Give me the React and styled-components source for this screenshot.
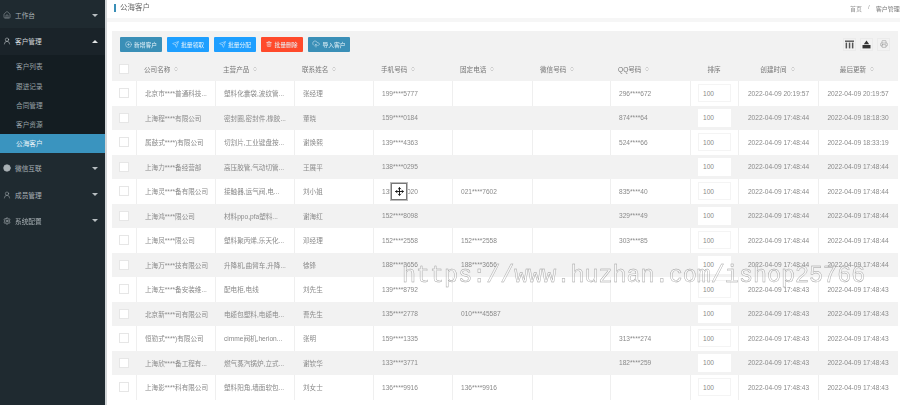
import styled, { createGlobalStyle } from "styled-components";
import {
  Home,
  UserRound,
  ChevronsUpDown,
  CirclePlus,
  Send,
  Trash2,
  CloudUpload,
  Printer,
  Settings,
  Move,
  Compass,
} from "lucide-react";

const GlobalStyle = createGlobalStyle`
  html, body {
    margin: 0;
    height: 405px;
    overflow: hidden;
    background: #fff;
    font-family: "Liberation Sans", "Noto Sans CJK SC", sans-serif;
  }
`;

const Page = styled.div`
  position: relative;
  display: flex;
  width: 900px;
  height: 405px;
  overflow: hidden;
  filter: blur(0.45px);
`;

const Sidebar = styled.nav`
  width: 107px;
  flex-shrink: 0;
  padding-top: 2px;
  box-sizing: border-box;
  background: #1f2a30;
  border-right: 2px solid #d3d6d8;
`;

const MenuItem = styled.div`
  display: flex;
  align-items: center;
  height: 26.3px;
  padding-left: 3px;
  gap: 4px;
  font-size: 6.7px;
  color: ${(props) => (props.$open ? "#d5dadc" : "#a9b1b5")};
  background: ${(props) => (props.$open ? "#1a2329" : "transparent")};
`;

const MenuLabel = styled.span`
  flex: 1;
`;

const Caret = styled.span`
  width: 0;
  height: 0;
  margin-right: 7px;
  border-left: 3px solid transparent;
  border-right: 3px solid transparent;
  border-top: ${(props) => (props.$up ? "0" : "3px solid #b8bec1")};
  border-bottom: ${(props) => (props.$up ? "3px solid #e2e5e6" : "0")};
`;

const SubMenu = styled.div`
  padding-top: 2px;
  background: #141d22;
  margin-bottom: 2px;
`;

const SubItem = styled.div`
  display: flex;
  align-items: center;
  height: 19.3px;
  padding-left: 16px;
  font-size: 6.7px;
  color: ${(props) => (props.$active ? "#e8f3f8" : "#98a1a6")};
  background: ${(props) => (props.$active ? "#3a94bf" : "transparent")};
`;

const Main = styled.main`
  flex: 1;
  min-width: 0;
  display: flex;
  flex-direction: column;
`;

const TopBar = styled.header`
  display: flex;
  align-items: center;
  justify-content: space-between;
  height: 16px;
  padding: 0 0 2px 7px;
  border-bottom: 4px solid #f6f6f6;
`;

const PageTitle = styled.h1`
  margin: 0;
  padding-left: 4px;
  border-left: 2px solid #3a8fb7;
  font-size: 7.5px;
  line-height: 8px;
  font-weight: 400;
  color: #666;
`;

const Crumbs = styled.div`
  display: flex;
  gap: 6px;
  width: 50px;
  flex-shrink: 0;
  overflow: hidden;
  white-space: nowrap;
  font-size: 6px;
  color: #999;
`;

const CrumbCurrent = styled.span`
  color: #777;
`;

const Panel = styled.section`
  margin: 9px 2px 0 5px;
  background: #f2f2f2;
`;

const Toolbar = styled.div`
  display: flex;
  align-items: center;
  height: 26px;
  padding: 0 8px;
  gap: 5px;
`;

const ActionButton = styled.button`
  display: flex;
  align-items: center;
  justify-content: center;
  gap: 2px;
  width: 42px;
  height: 15px;
  padding: 0;
  border: 0;
  border-radius: 1px;
  font-family: inherit;
  font-size: 5.8px;
  color: #e8f4fa;
  background: ${(props) => props.$bg || "#1e9fff"};
`;

const ToolGroup = styled.div`
  display: flex;
  gap: 4px;
  margin-left: auto;
`;

const ToolButton = styled.div`
  display: flex;
  align-items: center;
  justify-content: center;
  width: 13px;
  height: 13px;
  border: 1px solid #ebebeb;
  box-sizing: border-box;
  color: ${(props) => props.$color || "#666"};
`;

const columns = "24px 79px 79px 79px 79px 80px 78px 80px 48px 80px 79px";

const HeadRow = styled.div`
  display: grid;
  grid-template-columns: ${columns};
  height: 24px;
`;

const Row = styled.div`
  display: grid;
  grid-template-columns: ${columns};
  height: 24.5px;
  background: ${(props) => (props.$even ? "#f2f2f2" : "#fff")};
`;

const HeadCell = styled.div`
  display: flex;
  align-items: center;
  justify-content: ${(props) => (props.$center ? "center" : "flex-start")};
  gap: 3px;
  padding-left: ${(props) => (props.$center ? "0" : "8px")};
  font-size: 6.6px;
  color: #777;
`;

const Cell = styled.div`
  display: flex;
  align-items: center;
  justify-content: ${(props) => (props.$center ? "center" : "flex-start")};
  padding-left: ${(props) => (props.$center ? "0" : "8px")};
  border-left: 1px solid ${(props) => (props.$even ? "#f2f2f2" : "#efefef")};
  box-sizing: border-box;
  overflow: hidden;
  white-space: nowrap;
  font-size: 6.6px;
  color: #8a8a8a;
`;

const CheckCell = styled.div`
  display: flex;
  align-items: center;
  justify-content: center;
`;

const CheckBox = styled.span`
  width: 8px;
  height: 8px;
  background: #fff;
  border: 1px solid #e6e6e6;
`;

const SortInput = styled.div`
  display: flex;
  align-items: center;
  width: 33px;
  height: 18px;
  padding-left: 4px;
  box-sizing: border-box;
  background: #fff;
  border: 1px solid ${(props) => (props.$even ? "#fff" : "#f4f4f4")};
  font-size: 6.6px;
  color: #8a8a8a;
`;

const Watermark = styled.div`
  position: absolute;
  left: 402px;
  top: 261px;
  font-family: "Liberation Mono", monospace;
  font-size: 23.4px;
  line-height: 30px;
  color: rgba(255, 255, 255, 0.3);
  -webkit-text-stroke: 0.4px #9a9a9a;
`;

const DragCursor = styled.div`
  position: absolute;
  left: 391px;
  top: 183px;
  display: flex;
  align-items: center;
  justify-content: center;
  width: 16px;
  height: 17px;
  box-sizing: border-box;
  background: #fff;
  border: 1px solid #777;
  outline: 1px solid #bbb;
  color: #111;
`;

const heads = ["公司名称", "主营产品", "联系姓名", "手机号码", "固定电话", "微信号码", "QQ号码"];

const day = "2022-04-09 ";

const rows = [
  ["北京市****普通科技...", "塑料化囊袋,波纹管...", "张经理", "199****5777", "", "", "296****672", "20:19:57", "20:19:57"],
  ["上海程****有限公司", "密封圈,密封件,橡胶...", "董晓", "159****0184", "", "", "874****64", "17:48:44", "18:18:30"],
  ["属鼓式****)有限公司", "切割片,工业键盘按...", "谢焕熙", "139****4363", "", "", "524****66", "17:48:44", "18:33:19"],
  ["上海力****备经营部", "高压胶管,气动切管...", "王展平", "138****0295", "", "", "", "17:48:44", "17:48:44"],
  ["上海灵****备有限公司", "接触器,运气阀,电...", "刘小姐", "135****3020", "021****7602", "", "835****40", "17:48:44", "17:48:44"],
  ["上海鸿****限公司", "材料ppo,pfa塑料...", "谢海红", "152****8098", "", "", "329****49", "17:48:44", "17:48:44"],
  ["上海凤****限公司", "塑料聚丙烯,乐天化...", "邓经理", "152****2558", "152****2558", "", "303****85", "17:48:44", "17:48:44"],
  ["上海万****技有限公司", "升降机,曲臂车,升降...", "徐锋", "188****3656", "188****3656", "", "", "17:48:44", "17:48:44"],
  ["上海左****备安装维...", "配电柜,电线", "刘先生", "139****8792", "", "", "", "17:48:43", "17:48:43"],
  ["北京新****司有限公司", "电缆包塑料,电缆电...", "曹先生", "135****2778", "010****45587", "", "", "17:48:43", "17:48:43"],
  ["恒勤式****)有限公司", "cimme阀机,herion...", "张明", "159****1335", "", "", "313****274", "17:48:43", "17:48:43"],
  ["上海欣****备工程有...", "燃气蒸汽锅炉,立式...", "谢钦华", "133****3771", "", "", "182****259", "17:48:43", "17:48:43"],
  ["上海影****科有限公司", "塑料阳角,墙面软包...", "刘女士", "136****9916", "136****9916", "", "", "17:48:43", "17:48:43"],
];

function SortMark() {
  return <ChevronsUpDown size={6} color="#aaa" strokeWidth={2} />;
}

function ColumnsIcon() {
  return (
    <svg width="9" height="9" viewBox="0 0 9 9" fill="currentColor">
      <rect x="0" y="0.5" width="9" height="1.4" />
      <rect x="0.6" y="2.6" width="1.5" height="5.8" />
      <rect x="3.8" y="2.6" width="1.5" height="5.8" />
      <rect x="6.9" y="2.6" width="1.5" height="5.8" />
    </svg>
  );
}

function ExportIcon() {
  return (
    <svg width="9" height="9" viewBox="0 0 9 9" fill="currentColor">
      <path d="M4.5 0.5 L7.2 4.2 H1.8 Z" />
      <rect x="0.5" y="5" width="8" height="3.4" />
    </svg>
  );
}

function App() {
  return (
    <Page>
      <GlobalStyle />
      <Sidebar>
        <MenuItem>
          <Home size={8} strokeWidth={1.5} />
          <MenuLabel>工作台</MenuLabel>
          <Caret />
        </MenuItem>
        <MenuItem $open>
          <UserRound size={8} strokeWidth={1.5} />
          <MenuLabel>客户管理</MenuLabel>
          <Caret $up />
        </MenuItem>
        <SubMenu>
          <SubItem>客户列表</SubItem>
          <SubItem>跟进记录</SubItem>
          <SubItem>合同管理</SubItem>
          <SubItem>客户资源</SubItem>
          <SubItem $active>公海客户</SubItem>
        </SubMenu>
        <MenuItem>
          <Compass size={8} strokeWidth={2} fill="#a9b1b5" />
          <MenuLabel>微信互联</MenuLabel>
          <Caret />
        </MenuItem>
        <MenuItem>
          <UserRound size={8} strokeWidth={1.5} />
          <MenuLabel>成员管理</MenuLabel>
          <Caret />
        </MenuItem>
        <MenuItem>
          <Settings size={8} strokeWidth={2} />
          <MenuLabel>系统配置</MenuLabel>
          <Caret />
        </MenuItem>
      </Sidebar>
      <Main>
        <TopBar>
          <PageTitle>公海客户</PageTitle>
          <Crumbs>
            <span>首页</span>
            <span>/</span>
            <CrumbCurrent>客户管理</CrumbCurrent>
          </Crumbs>
        </TopBar>
        <Panel>
          <Toolbar>
            <ActionButton $bg="#3a8fb7">
              <CirclePlus size={7} strokeWidth={1.5} />
              新增客户
            </ActionButton>
            <ActionButton>
              <Send size={7} strokeWidth={1.5} />
              批量领取
            </ActionButton>
            <ActionButton>
              <Send size={7} strokeWidth={1.5} />
              批量分配
            </ActionButton>
            <ActionButton $bg="#ff4a2b">
              <Trash2 size={6} strokeWidth={2} />
              批量删除
            </ActionButton>
            <ActionButton $bg="#3a8fb7">
              <CloudUpload size={8} strokeWidth={1.5} />
              导入客户
            </ActionButton>
            <ToolGroup>
              <ToolButton $color="#555">
                <ColumnsIcon />
              </ToolButton>
              <ToolButton $color="#333">
                <ExportIcon />
              </ToolButton>
              <ToolButton $color="#888">
                <Printer size={8} strokeWidth={1.5} />
              </ToolButton>
            </ToolGroup>
          </Toolbar>
          <HeadRow>
            <CheckCell>
              <CheckBox />
            </CheckCell>
            {heads.map((label) => (
              <HeadCell key={label}>
                {label}
                <SortMark />
              </HeadCell>
            ))}
            <HeadCell $center>排序</HeadCell>
            <HeadCell $center>
              创建时间
              <SortMark />
            </HeadCell>
            <HeadCell $center>
              最后更新
              <SortMark />
            </HeadCell>
          </HeadRow>
          {rows.map((row, i) => {
            const even = i % 2 === 1;
            return (
              <Row key={row[0]} $even={even}>
                <CheckCell>
                  <CheckBox />
                </CheckCell>
                {row.slice(0, 7).map((text, j) => (
                  <Cell key={j} $even={even}>
                    {text}
                  </Cell>
                ))}
                <Cell $center $even={even}>
                  <SortInput $even={even}>100</SortInput>
                </Cell>
                <Cell $center $even={even}>
                  {day + row[7]}
                </Cell>
                <Cell $center $even={even}>
                  {day + row[8]}
                </Cell>
              </Row>
            );
          })}
        </Panel>
      </Main>
      <Watermark>https://www.huzhan.com/ishop25766</Watermark>
      <DragCursor>
        <Move size={9} strokeWidth={2.5} />
      </DragCursor>
    </Page>
  );
}

export default App;
